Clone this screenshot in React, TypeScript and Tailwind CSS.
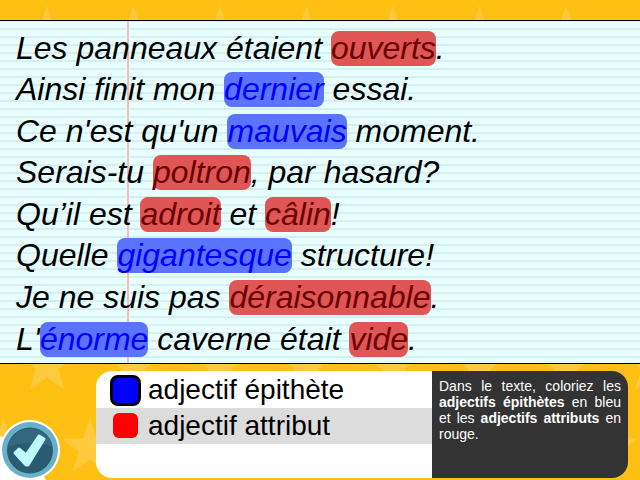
const lines: { parts: (string | { word: string; kind: "epithete" | "attribut" })[] }[] = [
  { parts: ["Les panneaux étaient ", { word: "ouverts", kind: "attribut" }, "."] },
  { parts: ["Ainsi finit mon ", { word: "dernier", kind: "epithete" }, " essai."] },
  { parts: ["Ce n'est qu'un ", { word: "mauvais", kind: "epithete" }, " moment."] },
  { parts: ["Serais-tu ", { word: "poltron", kind: "attribut" }, ", par hasard?"] },
  { parts: ["Qu’il est ", { word: "adroit", kind: "attribut" }, " et ", { word: "câlin", kind: "attribut" }, "!"] },
  { parts: ["Quelle ", { word: "gigantesque", kind: "epithete" }, " structure!"] },
  { parts: ["Je ne suis pas ", { word: "déraisonnable", kind: "attribut" }, "."] },
  { parts: ["L'", { word: "énorme", kind: "epithete" }, " caverne était ", { word: "vide", kind: "attribut" }, "."] },
];

// star pattern behind the page
const StarBackdrop = () => (
  <svg className="absolute inset-0 h-full w-full" aria-hidden="true">
    <defs>
      <pattern id="stars" x="3.5" y="35.5" width="86.5" height="165" patternUnits="userSpaceOnUse">
        <path d="M43.5 -29.5L50.4 -9.5L71.5 -9.1L54.7 3.6L60.8 23.9L43.5 11.8L26.2 23.9L32.3 3.6L15.5 -9.1L36.6 -9.5Z" fill="#ffca3e" />
        <path d="M43.5 135.5L50.4 155.5L71.5 155.9L54.7 168.6L60.8 188.9L43.5 176.8L26.2 188.9L32.3 168.6L15.5 155.9L36.6 155.5Z" fill="#ffca3e" />
        <path d="M0 53L6.9 73L28 73.4L11.2 86.1L17.3 106.4L0 94.3L-17.3 106.4L-11.2 86.1L-28 73.4L-6.9 73Z" fill="#ffca3e" />
        <path d="M86.5 53L93.4 73L114.5 73.4L97.7 86.1L103.8 106.4L86.5 94.3L69.2 106.4L75.3 86.1L58.5 73.4L79.6 73Z" fill="#ffca3e" />
      </pattern>
    </defs>
    <rect width="100%" height="100%" fill="url(#stars)" />
  </svg>
);

const CheckButton = () => (
  <button className="absolute bottom-0 left-0 h-[60px] w-[60px]" aria-label="Valider">
    <svg viewBox="0 0 60 60" className="h-[60px] w-[60px]">
      <path d="M0 16L0 60L46 60L30 30Z" fill="#fff" />
      <circle cx="30" cy="30" r="30" fill="#fff" />
      <circle cx="30" cy="30" r="28" fill="#67b2c9" />
      <circle cx="30" cy="30.5" r="23" fill="#2b5b72" />
      <path d="M7.5 27a23 23 0 0 1 45 0a30 12 0 0 0-45 0Z" fill="#35687f" />
      <path
        d="M39 16L44 19L28 45L26 45L15 33L19 29L26 35Z"
        fill="#bcfafb"
        stroke="#bcfafb"
        strokeWidth="3"
        strokeLinejoin="round"
      />
    </svg>
  </button>
);

export default function App() {
  return (
    <div className="relative h-[480px] w-[640px] overflow-hidden bg-[#fec013] font-['Liberation_Sans',sans-serif]">
      <StarBackdrop />
      <div className="relative flex h-full flex-col pt-5">
        <div className="relative h-[344px] border-y border-black bg-[#e8ffff] bg-[linear-gradient(#d6eff1_2px,transparent_2px),linear-gradient(#c8e4e4_2px,transparent_2px)] [background-size:100%_8px,100%_32px] [background-position:0_7px,0_31px] pl-4 pt-[6.5px]">
          <div className="absolute bottom-0 left-[127px] top-0 w-[2px] bg-[#f5bcbc]" />
          <div className="relative">
            {lines.map((line, i) => (
              <p key={i} className="h-[41.6px] text-[32px] italic leading-[41.6px] text-black">
                {line.parts.map((part, j) =>
                  typeof part === "string" ? (
                    <span key={j}>{part}</span>
                  ) : (
                    <span
                      key={j}
                      className={
                        part.kind === "epithete"
                          ? "inline-block h-[35px] rounded-lg bg-[#5b74ff] leading-[35px] text-[#0000ff]"
                          : "inline-block h-[35px] rounded-lg bg-[#e05555] leading-[35px] text-[#6b0000]"
                      }
                    >
                      {part.word}
                    </span>
                  ),
                )}
              </p>
            ))}
          </div>
        </div>
        <div className="flex flex-1 items-start pl-24 pr-3 pt-[7px]">
          <div className="flex h-[107px] w-[336px] flex-col rounded-l-2xl bg-white pt-[1px] text-[28px] text-black">
            <div className="flex h-[36px] items-center gap-[7px] pl-[14px]">
              <span className="h-[31px] w-[31px] rounded-lg border-[3px] border-black bg-[#0000ff]" />
              <span>adjectif épithète</span>
            </div>
            <div className="flex h-[36px] items-center gap-[7px] bg-[#dcdcdc] pl-[17px]">
              <span className="mb-[2px] h-[25px] w-[25px] rounded-md bg-[#ff0000]" />
              <span className="ml-[3px]">adjectif attribut</span>
            </div>
          </div>
          <div className="h-[107px] w-[196px] rounded-r-2xl bg-[#333333] px-[7px] pt-[7px] text-justify text-[14px] leading-4 text-white">
            Dans le texte, coloriez les <b>adjectifs épithètes</b> en bleu et les <b>adjectifs attributs</b> en rouge.
          </div>
        </div>
      </div>
      <CheckButton />
    </div>
  );
}
